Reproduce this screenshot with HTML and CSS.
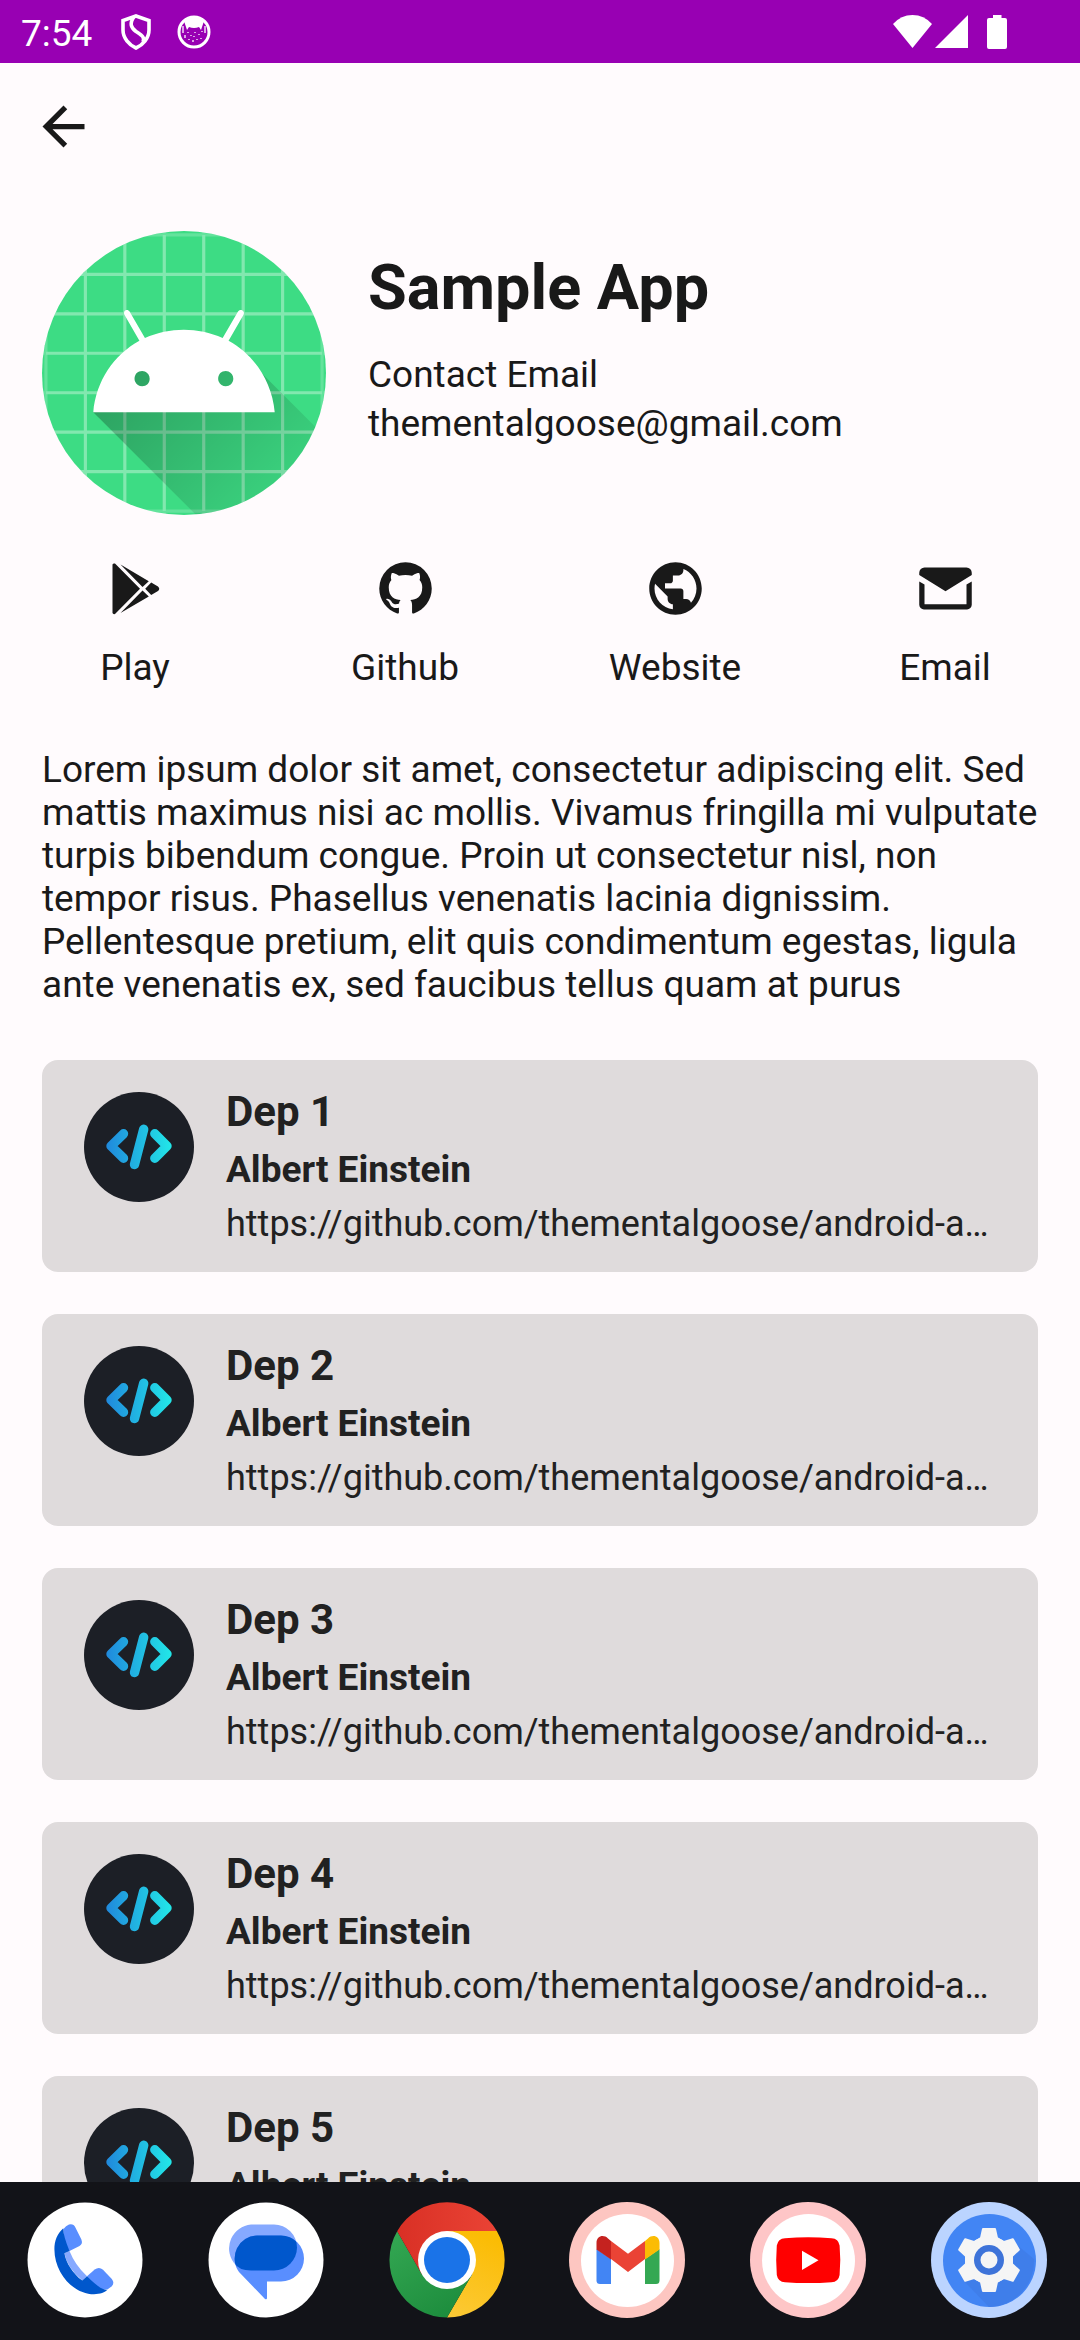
FILE: index.html
```html
<!DOCTYPE html>
<html lang="en">
<head>
<meta charset="utf-8">
<meta name="viewport" content="width=device-width, initial-scale=1">
<title>Sample App</title>
<link rel="stylesheet" href="styles.css">
</head>
<body class="screen">
<svg class="defs" width="0" height="0" aria-hidden="true">
  <defs>
    <linearGradient id="code-fill" gradientUnits="userSpaceOnUse" x1="22" y1="54" x2="88" y2="54">
      <stop offset="0" stop-color="#2088dc"/><stop offset="1" stop-color="#22e8e8"/>
    </linearGradient>
    <symbol id="code" viewBox="0 0 110 110">
      <circle cx="55" cy="55" r="55" fill="#1c1f26"/>
      <path d="M39.500 41.800L27 54l12.500 12.200M59.700 37.300L50.500 72.500M70.800 41.800L83 54l-12.200 12.200" fill="none" stroke="url(#code-fill)" stroke-width="9.400" stroke-linecap="round" stroke-linejoin="round"/>
    </symbol>
  </defs>
</svg>

<header class="status">
  <time class="status-time">7:54</time>
  <svg class="status-shield" viewBox="0 0 30 36" aria-hidden="true"><path d="M15 2L28 6.500V16C28 24 22 31 15 34 8 31 2 24 2 16V6.500zM13 3C8.500 9 9.500 13.500 15 17.500 21 21.500 24 23 22 28" fill="none" stroke="#fff" stroke-width="3.600"/></svg>
  <svg class="status-badge" viewBox="0 0 34 34" aria-hidden="true"><circle cx="17" cy="17" r="15" fill="none" stroke="#fff" stroke-width="3"/><path d="M7 6Q17-1 27 6L24 15 22 12Q17 14 12 12L10 15z" fill="#fff"/><path d="M6 11v7M28 11v7M8 20v3M11 17v1M14 20v1M18 17v1M22 19v1M25 16v1M12 24v1M16 25v2M20 24v1M24 23v1M17 21v1" fill="none" stroke="#eacdf0" stroke-width="1.600"/></svg>
  <span class="status-spacer"></span>
  <svg class="status-wifi" viewBox="0 0 39 33" aria-hidden="true"><path d="M0 9Q8 0 19.500 0T39 9L19.500 33z" fill="#fff"/></svg>
  <svg class="status-signal" viewBox="0 0 33 33" aria-hidden="true"><path d="M33 0V33H0z" fill="#fff"/></svg>
  <svg class="status-battery" viewBox="0 0 20 34" aria-hidden="true"><path d="M6 0h8.500v3H18a2 2 0 0 1 2 2V32a2 2 0 0 1-2 2H2a2 2 0 0 1-2-2V5a2 2 0 0 1 2-2h4z" fill="#fff"/></svg>
</header>

<main class="content">
  <nav class="toolbar">
    <button class="back" type="button" aria-label="Back">
      <svg class="icon" viewBox="0 0 24 24"><path d="M20 11H7.830l5.590-5.590L12 4l-8 8 8 8 1.410-1.410L7.830 13H20z"/></svg>
    </button>
  </nav>

  <section class="profile">
    <svg class="avatar" viewBox="18 18 72 72" role="img" aria-label="App icon">
      <defs>
        <clipPath id="avatar-clip"><circle cx="54" cy="54" r="36"/></clipPath>
        <linearGradient id="shade" gradientUnits="userSpaceOnUse" x1="42.949" y1="49.598" x2="85.848" y2="92.496"><stop offset="0" stop-opacity=".267"/><stop offset="1" stop-opacity="0"/></linearGradient>
      </defs>
      <g clip-path="url(#avatar-clip)">
        <path d="M18 18h72v72H18z" fill="#3ddc84"/>
        <path d="M19 0V108M29 0V108M39 0V108M49 0V108M59 0V108M69 0V108M79 0V108M89 0V108M0 19H108M0 29H108M0 39H108M0 49H108M0 59H108M0 69H108M0 79H108M0 89H108" stroke="#fff" stroke-opacity=".2" stroke-width=".8"/>
        <path d="M29 19V89M39 19V89M49 19V89M59 19V89M69 19V89M79 19V89M19 29H89M19 39H89M19 49H89M19 59H89M19 69H89M19 79H89" stroke="#fff" stroke-opacity=".2" stroke-width=".8"/>
        <path d="M31 63.928c0 0 6.400-11 12.100-13.100c7.200-2.600 26-1.400 26-1.400l38.100 38.100L107 108.928l-32-1L31 63.928z" fill="url(#shade)"/>
        <path d="M65.300 45.828l3.800-6.600c.2-.4.1-.9-.3-1.100c-.4-.2-.9-.1-1.100.3l-3.900 6.700c-6.300-2.800-13.400-2.800-19.700 0l-3.900-6.700c-.2-.4-.7-.5-1.100-.3C38.800 38.328 38.700 38.828 38.900 39.228l3.800 6.600C36.200 49.428 31.700 56.028 31 63.928h46C76.300 56.028 71.800 49.428 65.300 45.828zM43.400 57.328c-.8 0-1.500-.5-1.800-1.200c-.3-.7-.1-1.500.4-2.100c.5-.5 1.400-.7 2.100-.4c.7.3 1.200 1 1.200 1.800C45.300 56.528 44.500 57.328 43.400 57.328zM64.600 57.328c-.8 0-1.500-.5-1.800-1.200s-.1-1.500.4-2.100c.5-.5 1.400-.7 2.100-.4c.7.3 1.200 1 1.200 1.800C66.500 56.528 65.600 57.328 64.600 57.328z" fill="#fff"/>
      </g>
    </svg>
    <div class="profile-text">
      <h1 class="app-name">Sample App</h1>
      <p class="contact">Contact Email</p>
      <p class="contact">thementalgoose@gmail.com</p>
    </div>
  </section>

  <nav class="actions" aria-label="Links">
    <a class="action" href="#play">
      <svg class="icon" viewBox="0 0 63 63"><path d="M8.500 7.500Q9 6 11 6.500L36 31.800 11 57Q9 57.500 8.500 56zM16.500 7.500L44.800 24.200 38.500 30zM16.500 56L38.500 33.600 44.800 39.400zM47.200 25.500L54 29.500Q56.500 31.800 54 34.100L47.200 38.100 41.200 31.800z"/></svg>
      Play</a>
    <a class="action" href="#github">
      <svg class="icon" viewBox="0 0 24 24"><path d="M12 2A10 10 0 0 0 2 12C2 16.420 4.870 20.170 8.840 21.500C9.340 21.580 9.500 21.270 9.500 21C9.500 20.770 9.500 20.140 9.500 19.310C6.730 19.910 6.140 17.970 6.140 17.970C5.680 16.810 5.030 16.500 5.030 16.500C4.120 15.880 5.100 15.900 5.100 15.900C6.100 15.970 6.630 16.930 6.630 16.930C7.500 18.450 8.970 18 9.540 17.760C9.630 17.110 9.890 16.670 10.170 16.420C7.950 16.170 5.620 15.310 5.620 11.500C5.620 10.390 6 9.500 6.650 8.790C6.550 8.540 6.200 7.500 6.750 6.150C6.750 6.150 7.590 5.880 9.500 7.170C10.290 6.950 11.150 6.840 12 6.840C12.850 6.840 13.710 6.950 14.500 7.170C16.410 5.880 17.250 6.150 17.250 6.150C17.800 7.500 17.450 8.540 17.350 8.790C18 9.500 18.380 10.390 18.380 11.500C18.380 15.320 16.040 16.160 13.810 16.410C14.170 16.720 14.500 17.330 14.500 18.260C14.500 19.600 14.500 20.680 14.500 21C14.500 21.270 14.660 21.590 15.170 21.500C19.140 20.160 22 16.420 22 12A10 10 0 0 0 12 2Z"/></svg>
      Github</a>
    <a class="action" href="#website">
      <svg class="icon" viewBox="0 0 24 24"><path d="M12 2C6.480 2 2 6.480 2 12s4.480 10 10 10 10-4.480 10-10S17.520 2 12 2zM11 19.930c-3.950-.49-7-3.850-7-7.930 0-.62.08-1.210.21-1.790L9 15v1c0 1.100.9 2 2 2v1.930zM17.900 17.390c-.26-.81-1-1.390-1.900-1.390h-1v-3c0-.55-.45-1-1-1H8v-2h2c.55 0 1-.45 1-1V7h2c1.100 0 2-.9 2-2v-.41c2.930 1.190 5 4.060 5 7.410 0 2.080-.8 3.970-2.100 5.390z"/></svg>
      Website</a>
    <a class="action" href="#email">
      <svg class="icon" viewBox="0 0 24 24"><path d="M4 4h16a2 2 0 0 1 2 2v.9L12 13 2 6.900V6a2 2 0 0 1 2-2zM2 9.300L4 10.500V18H20V10.500L22 9.300V18.200A1.800 1.800 0 0 1 20.200 20H3.800A1.800 1.800 0 0 1 2 18.200z"/></svg>
      Email</a>
  </nav>

  <p class="about">Lorem ipsum dolor sit amet, consectetur adipiscing elit. Sed mattis maximus nisi ac mollis. Vivamus fringilla mi vulputate turpis bibendum congue. Proin ut consectetur nisl, non tempor risus. Phasellus venenatis lacinia dignissim. Pellentesque pretium, elit quis condimentum egestas, ligula ante venenatis ex, sed faucibus tellus quam at purus</p>

  <section class="deps" aria-label="Dependencies">
    <article class="card">
      <svg class="card-icon" aria-hidden="true"><use href="#code"/></svg>
      <div class="card-text"><h2 class="card-title">Dep 1</h2><p class="card-author">Albert Einstein</p><a class="card-url" href="https://github.com/thementalgoose/android-about">https://github.com/thementalgoose/android-about</a></div>
    </article>
    <article class="card">
      <svg class="card-icon" aria-hidden="true"><use href="#code"/></svg>
      <div class="card-text"><h2 class="card-title">Dep 2</h2><p class="card-author">Albert Einstein</p><a class="card-url" href="https://github.com/thementalgoose/android-about">https://github.com/thementalgoose/android-about</a></div>
    </article>
    <article class="card">
      <svg class="card-icon" aria-hidden="true"><use href="#code"/></svg>
      <div class="card-text"><h2 class="card-title">Dep 3</h2><p class="card-author">Albert Einstein</p><a class="card-url" href="https://github.com/thementalgoose/android-about">https://github.com/thementalgoose/android-about</a></div>
    </article>
    <article class="card">
      <svg class="card-icon" aria-hidden="true"><use href="#code"/></svg>
      <div class="card-text"><h2 class="card-title">Dep 4</h2><p class="card-author">Albert Einstein</p><a class="card-url" href="https://github.com/thementalgoose/android-about">https://github.com/thementalgoose/android-about</a></div>
    </article>
    <article class="card">
      <svg class="card-icon" aria-hidden="true"><use href="#code"/></svg>
      <div class="card-text"><h2 class="card-title">Dep 5</h2><p class="card-author">Albert Einstein</p><a class="card-url" href="https://github.com/thementalgoose/android-about">https://github.com/thementalgoose/android-about</a></div>
    </article>
  </section>
</main>

<footer class="dock">
  <button class="dock-item" type="button" aria-label="Phone">
    <svg class="dock-icon" viewBox="0 0 116 116">
      <circle cx="58" cy="58" r="57.500" fill="#fff"/>
      <path d="M37.400 51.300L42.500 49Q48 63 60 74.300L55.300 78.600Q40 66 37.400 51.300z" fill="#86a9ff"/>
      <path d="M36.300 27.300Q39 23.500 42 22.600Q46.500 21.500 48.400 25.500L54.400 37.500Q56 42 52.500 44L42.500 49 37 42z" fill="#598eff"/>
      <path d="M60 74.300L67.700 67.600Q72 64.500 76 67.800L84.800 77Q88 81 84.500 84.500L80.700 87.300 70 88z" fill="#598eff"/>
      <path d="M36.300 26.300C30 32 27.400 39 27.400 47.300C27.400 72 47 92.300 67 92.300C73 92.300 78 90.500 80.700 87.600Q75 89.500 60 74.300L55.300 78.600C46 72 39 61 37.400 51.300L42.500 49Q36 33 36.300 26.300z" fill="#0057cc"/>
    </svg>
  </button>
  <button class="dock-item" type="button" aria-label="Messages">
    <svg class="dock-icon" viewBox="0 0 116 116">
      <defs><clipPath id="bubble"><path d="M49 33.500H73A23 23 0 0 1 73 79.500H59V96q0 2-2 1L31 70A23 23 0 0 1 49 33.500Z"/></clipPath></defs>
      <circle cx="58" cy="58" r="57.500" fill="#fff"/>
      <path d="M43 22.500H66A23 23 0 0 1 66 68.500H34L26 61A24 24 0 0 1 43 22.500z" fill="#86a9ff"/>
      <path d="M49 33.500H73A23 23 0 0 1 73 79.500H59V96q0 2-2 1L31 70A23 23 0 0 1 49 33.500Z" fill="#598eff"/>
      <path d="M43 22.500H66A23 23 0 0 1 66 68.500H43Q31 68.500 26 61V30z" fill="#0057cc" clip-path="url(#bubble)"/>
    </svg>
  </button>
  <button class="dock-item" type="button" aria-label="Chrome">
    <svg class="dock-icon" viewBox="-58 -58 116 116">
      <defs>
        <linearGradient id="c-red"><stop offset="0" stop-color="#d93025"/><stop offset="1" stop-color="#ea4335"/></linearGradient>
        <linearGradient id="c-green" x1="0" y1="0" x2=".6" y2="1"><stop offset="0" stop-color="#34a853"/><stop offset="1" stop-color="#1e8e3e"/></linearGradient>
        <linearGradient id="c-yellow" x1=".5" y1="0" x2=".2" y2="1"><stop offset="0" stop-color="#fbbc04"/><stop offset="1" stop-color="#fcc934"/></linearGradient>
      </defs>
      <path d="M0-29H49.800A57.500 57.500 0 0 1 0 57.500L25 14.500z" fill="url(#c-yellow)"/>
      <path d="M0 57.500A57.500 57.500 0 0 1-49.800-28.800L-25 14.500 25 14.500z" fill="url(#c-green)"/>
      <path d="M-49.800-28.800A57.500 57.500 0 0 1 49.800-29H0L-25 14.500z" fill="url(#c-red)"/>
      <circle r="29" fill="#fff"/><circle r="23" fill="#1a73e8"/>
    </svg>
  </button>
  <button class="dock-item" type="button" aria-label="Gmail">
    <svg class="dock-icon" viewBox="0 0 116 116">
      <circle cx="58" cy="58" r="58" fill="#fdc6c1"/><circle cx="58.500" cy="58.500" r="46.500" fill="#fff"/>
      <path d="M27.500 47L42 57V82H31q-3.500 0-3.500-3.500z" fill="#4285f4"/>
      <path d="M90.500 47L76 57V82H87q3.500 0 3.500-3.500z" fill="#34a853"/>
      <path d="M27.500 47.500V41C27.500 34 34.500 32 39 36.500L42 39V57.500z" fill="#c5221f"/>
      <path d="M90.500 47.500V41C90.500 34 83.500 32 79 36.500L76 39V57.500z" fill="#fbbc04"/>
      <path d="M42 39L59 51.700 76 39V57L59 70 42 57z" fill="#ea4335"/>
    </svg>
  </button>
  <button class="dock-item" type="button" aria-label="YouTube">
    <svg class="dock-icon" viewBox="0 0 116 116">
      <circle cx="58" cy="58" r="58" fill="#fec6c7"/><circle cx="58.500" cy="58.500" r="46.500" fill="#fff"/>
      <path d="M35 36.200Q58 34.400 81.500 36.200Q88.500 36.500 89.600 43.500Q91 58 89.600 73Q88.500 80 81.500 80.200Q58 82 35 80.200Q28 80 26.800 73Q25.600 58 26.800 43.500Q28 36.500 35 36.200z" fill="#f00"/>
      <path d="M52 48.700L68.500 58.300 52 68z" fill="#fff"/>
    </svg>
  </button>
  <button class="dock-item" type="button" aria-label="Settings">
    <svg class="dock-icon" viewBox="-58 -58 116 116">
      <circle r="58" fill="#bbd4ff"/><circle cx=".5" cy=".5" r="46.500" fill="#4285f4"/>
      <path d="M28-15L45-1A46 46 0 0 1 0 47L-26 20z" fill="#3f7ae6" opacity=".7"/>
      <g fill="#f5f5f5" stroke="#f5f5f5" stroke-width="2" stroke-linejoin="round">
        <circle r="23"/>
        <path id="tooth" d="M-11-20L-8-22-6-31H6L8-22 11-20z"/>
        <use href="#tooth" transform="rotate(60)"/><use href="#tooth" transform="rotate(120)"/><use href="#tooth" transform="rotate(180)"/><use href="#tooth" transform="rotate(240)"/><use href="#tooth" transform="rotate(300)"/>
      </g>
      <circle r="15" fill="#3d73d9"/><circle r="8.500" fill="#f5f5f5"/>
    </svg>
  </button>
</footer>
</body>
</html>
```
FILE: styles.css
```css
* {
  box-sizing: border-box;
}

.screen {
  display: flex;
  flex-direction: column;
  height: 100vh;
  margin: 0;
  overflow: hidden;
  background: #fffbfd;
  color: #191919;
  font-family: Roboto, "Noto Sans", sans-serif;
  font-size: 37px;
  line-height: 43px;
}

.defs {
  position: absolute;
}

h1, h2, p {
  margin: 0;
}

a {
  color: inherit;
  text-decoration: none;
}

button {
  padding: 0;
  border: 0;
  background: none;
  color: inherit;
  font: inherit;
}

svg {
  display: block;
  flex: none;
}

/* Status bar */
.status {
  display: flex;
  flex: none;
  align-items: center;
  height: 63px;
  padding: 0 73px 0 21px;
  background: #9800b3;
  color: #fff;
}

.status-time {
  width: 100px;
  padding-top: 3px;
}

.status-shield {
  width: 30px;
  height: 36px;
}

.status-badge {
  width: 34px;
  height: 34px;
  margin-left: 26px;
}

.status-spacer {
  flex: 1;
}

.status-wifi {
  width: 39px;
  height: 33px;
}

.status-signal {
  width: 33px;
  height: 33px;
  margin-left: 3px;
}

.status-battery {
  width: 20px;
  height: 34px;
  margin-left: 19px;
}

/* Scrolling page */
.content {
  flex: 1;
  min-height: 0;
  overflow: hidden;
}

.icon {
  width: 63px;
  height: 63px;
  fill: currentColor;
}

.toolbar {
  padding: 32px;
}

.back {
  display: block;
}

.profile {
  display: flex;
  gap: 42px;
  padding: 41px 42px 0;
}

.avatar {
  width: 284px;
  height: 284px;
}

.profile-text {
  min-width: 0;
  padding-top: 20px;
}

.app-name {
  margin-bottom: 28px;
  font-size: 63px;
  font-weight: 700;
  line-height: 74px;
}

.contact {
  margin-top: 6px;
}

.actions {
  display: grid;
  grid-template-columns: repeat(4, 1fr);
  padding-top: 42px;
}

.action {
  display: flex;
  flex-direction: column;
  align-items: center;
  gap: 26px;
}

.about {
  padding: 59px 42px 54px;
}

.deps {
  display: grid;
  gap: 42px;
  padding: 0 42px 42px;
}

.card {
  display: flex;
  gap: 32px;
  padding: 28px 42px 16px;
  border-radius: 16px;
  background: #dfdbdc;
  color: #212121;
}

.card-icon {
  width: 110px;
  height: 110px;
  margin-top: 4px;
}

.card-text {
  display: grid;
  flex: 1;
  align-content: start;
  min-width: 0;
  gap: 12px;
}

.card-title {
  font-size: 42px;
  font-weight: 700;
  line-height: 48px;
}

.card-author {
  font-weight: 700;
}

.card-url {
  overflow: hidden;
  padding-bottom: 11px;
  font-size: 36px;
  line-height: 42px;
  text-overflow: ellipsis;
  white-space: nowrap;
}

/* App dock */
.dock {
  display: flex;
  flex: none;
  justify-content: space-between;
  padding: 20px 33px 22px 27px;
  background: #121318;
}

.dock-item {
  border-radius: 50%;
}

.dock-icon {
  width: 116px;
  height: 116px;
}
```
